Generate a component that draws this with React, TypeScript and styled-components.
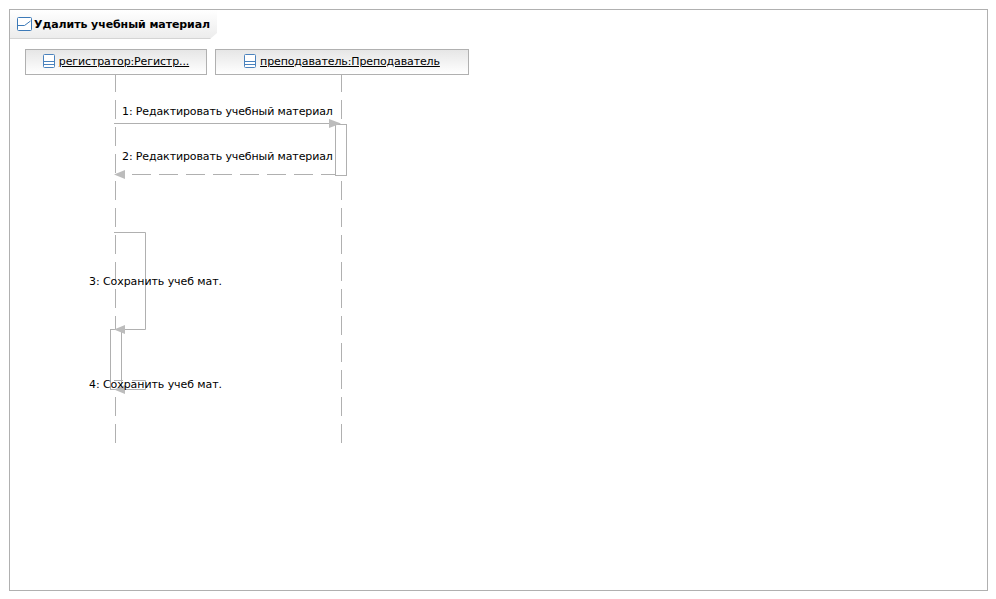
import React from 'react';
import styled, { createGlobalStyle } from 'styled-components';

const Global = createGlobalStyle`
  html, body { margin: 0; padding: 0; background: #fff; }
  body { font-family: "DejaVu Sans", sans-serif; font-size: 11px; color: #000; letter-spacing: -0.12px; }
`;

const Frame = styled.div`
  box-sizing: border-box;
  width: 979px;
  height: 582px;
  margin: 9px 0 0 9px;
  border: 1px solid #b0b0b0;
  display: flex;
  flex-direction: column;
  align-items: flex-start;
`;

const Tab = styled.div`
  box-sizing: border-box;
  width: 207px;
  height: 29px;
  padding: 0 0 0 7px;
  display: flex;
  align-items: center;
  gap: 2px;
  background: linear-gradient(#fff, #ececec);
  border-bottom: 1px solid #d4d4d4;
  clip-path: polygon(0 0, 100% 0, 100% 23px, 200px 100%, 0 100%);
  font-weight: 700;
  font-size: 11px;
  letter-spacing: -0.08px;
  white-space: nowrap;
`;

const Canvas = styled.div`
  position: relative;
  flex: 1;
  align-self: stretch;
`;

const Wires = styled.svg`
  position: absolute;
  left: -1px;
  top: -30px;
  width: 979px;
  height: 582px;
`;

const Lifeline = styled.div<{ $x: number; $w: number }>`
  box-sizing: border-box;
  position: absolute;
  left: ${p => p.$x - 10}px;
  top: 10px;
  width: ${p => p.$w}px;
  height: 26px;
  padding-bottom: 2px;
  display: flex;
  align-items: center;
  justify-content: center;
  gap: 4px;
  border: 1px solid #b0b0b0;
  background: linear-gradient(#e6e6e6, #fff);
`;

const LifelineName = styled.span`
  text-decoration: underline;
  white-space: nowrap;
`;

const Label = styled.div<{ $x: number; $y: number; $loose?: boolean }>`
  position: absolute;
  left: ${p => p.$x - 10}px;
  top: ${p => p.$y - 39}px;
  line-height: 14px;
  white-space: nowrap;
  letter-spacing: ${p => (p.$loose ? '-0.07px' : '-0.12px')};
`;

const DiagramIcon = () => (
  <svg width="15" height="15" viewBox="0 0 15 15" fill="none">
    <rect x="0.5" y="0.5" width="14" height="13" rx="1" fill="#fff" stroke="#3d7ab8" />
    <path d="M1 8.5H7.5L13.5 4" stroke="#3d7ab8" />
  </svg>
);

const ClassIcon = () => (
  <svg width="12" height="15" viewBox="0 0 12 15" fill="none">
    <rect x="0.5" y="0.5" width="11" height="13" rx="1" fill="#fff" stroke="#4a82bd" />
    <path d="M1 7.5H11M1 10.5H11" stroke="#4a82bd" />
  </svg>
);

const G = '#b0b0b0';
const A = '#bcbcbc';

export default function App() {
  return (
    <>
      <Global />
      <Frame>
        <Tab>
          <DiagramIcon />
          <span>Удалить учебный материал</span>
        </Tab>
        <Canvas>
          <Wires viewBox="9 9 979 582" fill="none" stroke={G}>
            <path d="M115.5 73V443M341.5 73V443" strokeDasharray="19 8" />
            <rect x="335.5" y="124.5" width="11" height="51" fill="#fff" />
            <path d="M114 123.5H336" />
            <path d="M329 119L341 123.5L329 128Z" fill={A} stroke="none" />
            <path d="M132 174.5H336" strokeDasharray="19 8" />
            <path d="M114 174.5L125 170V179Z" fill={A} stroke="none" />
            <path d="M114 232.5H145.5V329.5H122" />
            <rect x="110.5" y="329.5" width="11" height="60" fill="#fff" />
            <path d="M114 329.5L125 325V334Z" fill={A} stroke="none" />
            <path d="M114 380.5H123M132 380.5H145.5V389.5H125" />
            <path d="M114 389.5L125 385V394Z" fill={A} stroke="none" />
          </Wires>
          <Lifeline $x={25} $w={182}>
            <ClassIcon />
            <LifelineName>регистратор:Регистр...</LifelineName>
          </Lifeline>
          <Lifeline $x={215} $w={254}>
            <ClassIcon />
            <LifelineName>преподаватель:Преподаватель</LifelineName>
          </Lifeline>
          <Label $x={122} $y={105}>1: Редактировать учебный материал</Label>
          <Label $x={122} $y={150}>2: Редактировать учебный материал</Label>
          <Label $x={89} $y={275} $loose>3: Сохранить учеб мат.</Label>
          <Label $x={89} $y={378} $loose>4: Сохранить учеб мат.</Label>
        </Canvas>
      </Frame>
    </>
  );
}
